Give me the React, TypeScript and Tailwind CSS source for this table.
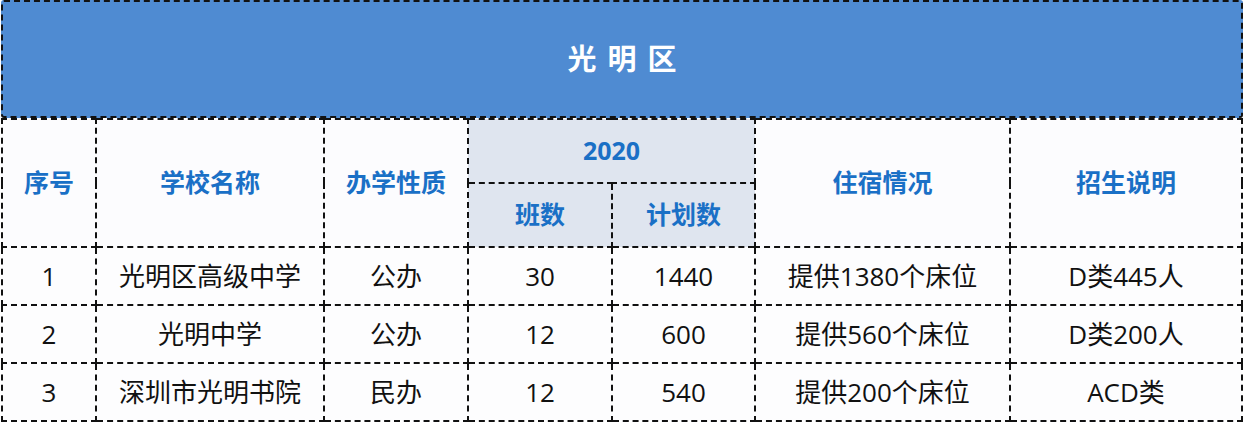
const rows = [
  { no: '1', name: '光明区高级中学', type: '公办', classes: '30', plan: '1440', dorm: '提供1380个床位', note: 'D类445人' },
  { no: '2', name: '光明中学', type: '公办', classes: '12', plan: '600', dorm: '提供560个床位', note: 'D类200人' },
  { no: '3', name: '深圳市光明书院', type: '民办', classes: '12', plan: '540', dorm: '提供200个床位', note: 'ACD类' },
];

const cell = 'border-2 border-dashed border-[#111] text-center align-middle p-0';
const head = `${cell} text-[25px] font-bold text-[#1a70c6] bg-[#fcfcfe]`;
const sub = `${cell} text-[25px] font-bold text-[#1a70c6] bg-[#dfe5ef]`;
const data = `${cell} text-[26px] text-[#111] bg-[#fdfdfe]`;

export default function App() {
  return (
    <div
      className="w-[1244px] h-[422px] bg-white px-[1px] overflow-hidden"
      style={{ fontFamily: '"Open Sans", "Noto Sans CJK SC", sans-serif' }}
    >
      <div className="h-[118px] bg-[#4f8bd2] border-2 border-dashed border-[#111] rounded-[3px] flex items-center justify-center">
        <span className="text-white text-[29px] font-bold tracking-[11px] pl-[11px]">光明区</span>
      </div>
      <table className="w-full table-fixed border-collapse">
        <colgroup>
          <col className="w-[94px]" />
          <col className="w-[228px]" />
          <col className="w-[144px]" />
          <col className="w-[144px]" />
          <col className="w-[143px]" />
          <col className="w-[255px]" />
          <col />
        </colgroup>
        <thead>
          <tr className="h-[64px]">
            <th rowSpan={2} className={head}>序号</th>
            <th rowSpan={2} className={head}>学校名称</th>
            <th rowSpan={2} className={head}>办学性质</th>
            <th colSpan={2} className={sub}>2020</th>
            <th rowSpan={2} className={head}>住宿情况</th>
            <th rowSpan={2} className={head}>招生说明</th>
          </tr>
          <tr className="h-[64px]">
            <th className={sub}>班数</th>
            <th className={sub}>计划数</th>
          </tr>
        </thead>
        <tbody>
          {rows.map((r) => (
            <tr key={r.no} className="h-[58px]">
              <td className={data}>{r.no}</td>
              <td className={data}>{r.name}</td>
              <td className={data}>{r.type}</td>
              <td className={data}>{r.classes}</td>
              <td className={data}>{r.plan}</td>
              <td className={data}>{r.dorm}</td>
              <td className={data}>{r.note}</td>
            </tr>
          ))}
        </tbody>
      </table>
    </div>
  );
}
